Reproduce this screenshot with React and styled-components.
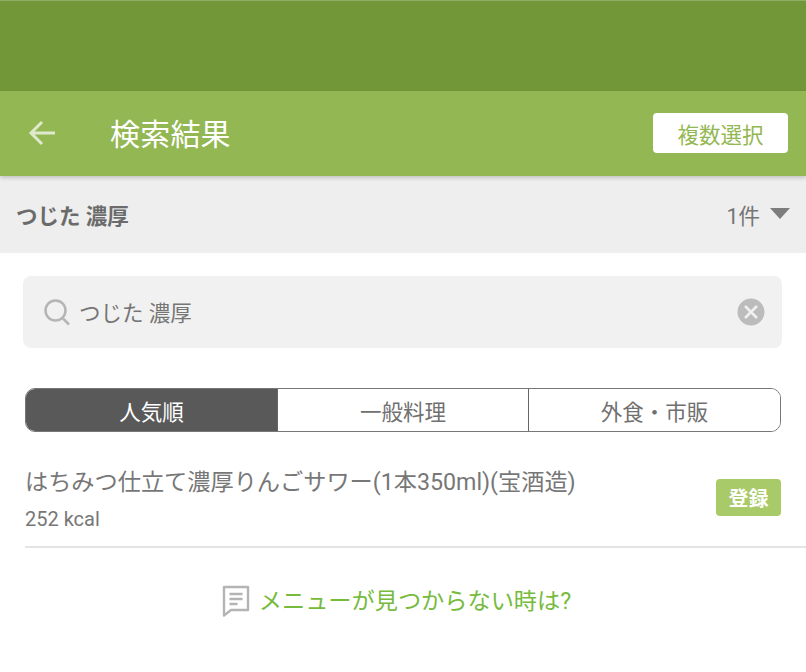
import React from 'react';
import styled, { createGlobalStyle } from 'styled-components';

const GlobalStyle = createGlobalStyle`
  html, body {
    margin: 0;
    padding: 0;
    background: #fff;
  }
  body {
    font-family: Roboto, "Noto Sans CJK JP", sans-serif;
  }
`

const Page = styled.div`
  width: 806px;
  height: 672px;
  overflow: hidden;
  background: #fff;
`

const StatusBar = styled.div`
  height: 91px;
  box-sizing: border-box;
  background: #719738;
  border-top: 1px solid #8fae63;
`

const AppBar = styled.header`
  height: 85px;
  background: #93b752;
  display: flex;
  align-items: center;
  padding: 0 18px 0 28px;
  box-shadow: 0 2px 4px rgba(0, 0, 0, 0.18);
  position: relative;
`

const BackButton = styled.div`
  width: 30px;
  height: 30px;
  display: flex;
  margin-right: 52px;
  margin-top: -2px;
`

const Title = styled.h1`
  flex: 1;
  margin: 0;
  padding-top: 2px;
  color: #fff;
  font-size: 30px;
  font-weight: 400;
  letter-spacing: 0.2px;
  line-height: 40px;
`

const MultiButton = styled.div`
  width: 135px;
  height: 40px;
  margin-top: -1px;
  border-radius: 4px;
  background: #fff;
  color: #93b752;
  font-size: 21.5px;
  display: flex;
  align-items: center;
  justify-content: center;
`

const QueryBar = styled.div`
  height: 77px;
  background: #eeeeee;
  display: flex;
  align-items: center;
  justify-content: space-between;
  padding: 0 16px;
  color: #666;
`

const QueryText = styled.span`
  font-size: 21.5px;
  font-weight: 700;
  color: #6b6b6b;
`

const CountWrap = styled.div`
  display: flex;
  align-items: center;
  gap: 10px;
  font-size: 21.5px;
  color: #757575;
`

const Caret = styled.span`
  width: 0;
  height: 0;
  border-left: 10.5px solid transparent;
  border-right: 10.5px solid transparent;
  border-top: 11px solid #7d7d7d;
  margin-top: -3px;
`

const SearchBox = styled.div`
  margin: 23px 24px 0 23px;
  height: 72px;
  border-radius: 8px;
  background: #f1f1f1;
  display: flex;
  align-items: center;
  padding: 0 17px 0 20px;
  color: #757575;
  font-size: 21.5px;
`

const SearchText = styled.span`
  flex: 1;
  margin-left: 8px;
  margin-top: -1px;
`

const Segments = styled.div`
  margin: 40px 25px 0 25px;
  height: 44px;
  box-sizing: border-box;
  border: 1px solid #777;
  border-radius: 10px;
  overflow: hidden;
  display: grid;
  grid-template-columns: 251px 251px 1fr;
`

const Segment = styled.div`
  display: flex;
  align-items: center;
  justify-content: center;
  font-size: 21.5px;
  color: ${p => (p.$active ? '#fff' : '#707070')};
  background: ${p => (p.$active ? '#595959' : '#fff')};
  & + & {
    border-left: 1px solid #666;
  }
`

const ResultRow = styled.div`
  margin-left: 25px;
  height: 116px;
  box-sizing: border-box;
  border-bottom: 2px solid #e4e4e4;
  padding: 34px 25px 0 0;
  display: flex;
  align-items: flex-start;
  justify-content: space-between;
`

const ResultName = styled.div`
  font-size: 23.2px;
  line-height: 32px;
  color: #777;
`

const ResultKcal = styled.div`
  font-size: 20px;
  line-height: 24px;
  margin-top: 9px;
  color: #777;
`

const RegisterButton = styled.div`
  width: 65px;
  height: 37px;
  margin-top: 13px;
  border-radius: 4px;
  background: #a8ca68;
  color: #fff;
  font-size: 20px;
  font-weight: 700;
  display: flex;
  align-items: center;
  justify-content: center;
`

const HelpLink = styled.div`
  margin-top: 36px;
  padding-right: 13px;
  display: flex;
  align-items: center;
  justify-content: center;
  gap: 9px;
  color: #76bb3c;
  font-size: 23.2px;
  line-height: 34px;
`

const ArrowIcon = () => (
  <svg width="30" height="30" viewBox="0 0 30 30" fill="none" stroke="#dfe9cb" strokeWidth="3">
    <path d="M3 15H27M14 4L3 15L14 26" />
  </svg>
)

const SearchIcon = () => (
  <svg width="28" height="28" viewBox="0 0 28 28" fill="none" stroke="#b5b5b5" strokeWidth="2.5">
    <circle cx="12.5" cy="12.5" r="10" />
    <path d="M19.5 20L26 26.5" />
  </svg>
)

const ClearIcon = () => (
  <svg width="28" height="28" viewBox="0 0 28 28">
    <circle cx="14" cy="14" r="13.5" fill="#bcbcbc" />
    <path d="M8 8L20 20M20 8L8 20" stroke="#f1f1f1" strokeWidth="2.5" />
  </svg>
)

const NoteIcon = () => (
  <svg width="28" height="32" viewBox="0 0 28 32" fill="none" stroke="#b4b4b4" strokeWidth="2.4">
    <path d="M2 2H26V25H9L2 30.5Z" strokeLinejoin="round" />
    <path d="M7.5 9H20.5M7.5 14H20.5M7.5 19H15.5" />
  </svg>
)

export default function App () {
  return (
    <Page>
      <GlobalStyle />
      <StatusBar />
      <AppBar>
        <BackButton><ArrowIcon /></BackButton>
        <Title>検索結果</Title>
        <MultiButton>複数選択</MultiButton>
      </AppBar>
      <QueryBar>
        <QueryText>つじた 濃厚</QueryText>
        <CountWrap>1件<Caret /></CountWrap>
      </QueryBar>
      <SearchBox>
        <SearchIcon />
        <SearchText>つじた 濃厚</SearchText>
        <ClearIcon />
      </SearchBox>
      <Segments>
        <Segment $active>人気順</Segment>
        <Segment>一般料理</Segment>
        <Segment>外食・市販</Segment>
      </Segments>
      <ResultRow>
        <div>
          <ResultName>はちみつ仕立て濃厚りんごサワー(1本350ml)(宝酒造)</ResultName>
          <ResultKcal>252 kcal</ResultKcal>
        </div>
        <RegisterButton>登録</RegisterButton>
      </ResultRow>
      <HelpLink><NoteIcon />メニューが見つからない時は?</HelpLink>
    </Page>
  )
}
